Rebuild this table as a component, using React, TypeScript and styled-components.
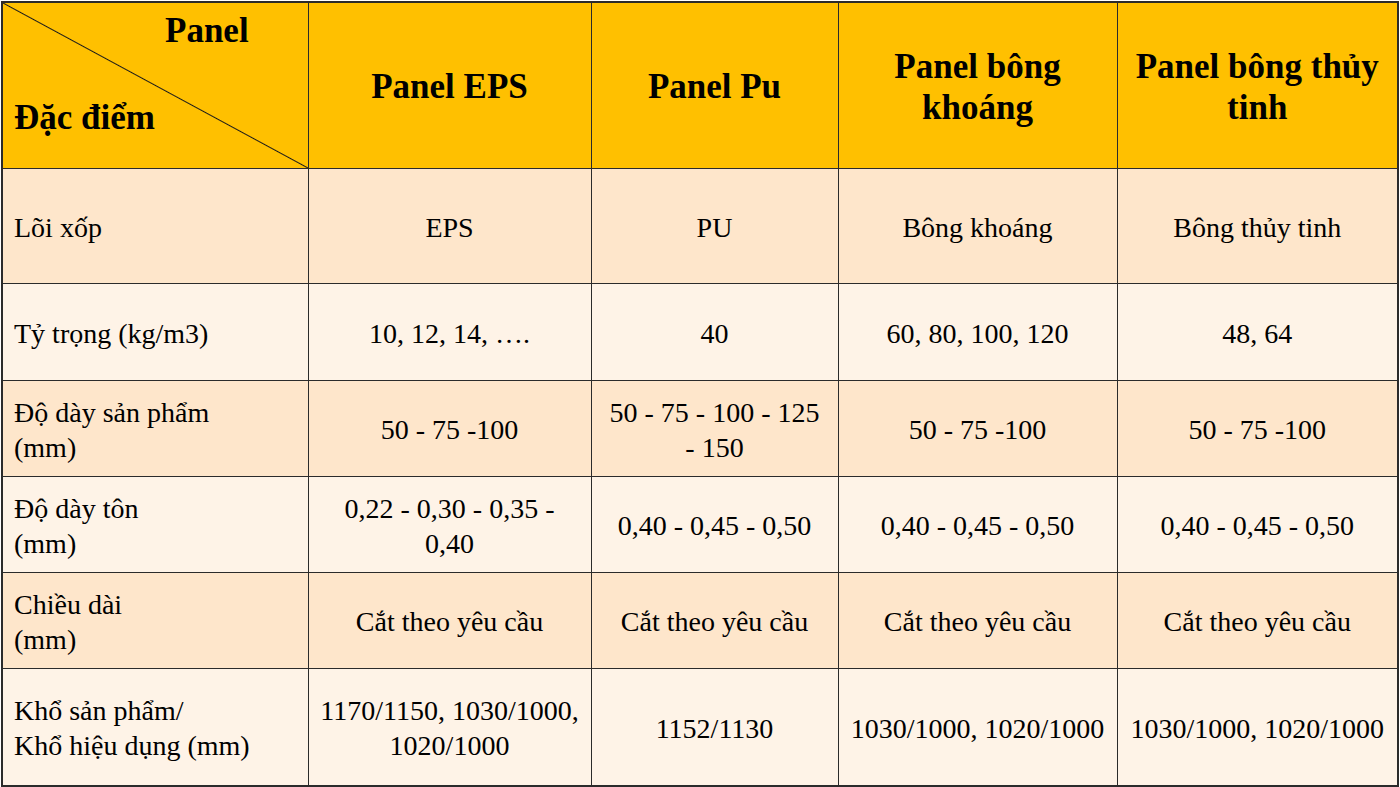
import styled, { createGlobalStyle } from 'styled-components'

const GlobalStyle = createGlobalStyle`
  html, body {
    margin: 0;
    padding: 0;
    background: #ffffff;
  }
  body {
    font-family: 'Liberation Serif', serif;
    color: #000;
  }
`

const Wrapper = styled.div`
  padding: 1px 0 0 1px;
`

const Table = styled.table`
  border-collapse: collapse;
  table-layout: fixed;
  width: 1396px;
  border: 2px solid #2b2b2b;
  font-family: 'Liberation Serif', serif;
  color: #000;
`

const HeadCell = styled.th`
  background: #ffc000;
  border: 1.5px solid #2b2b2b;
  font-family: 'Liberation Serif', serif;
  font-size: 35px;
  line-height: 41px;
  font-weight: 700;
  text-align: center;
  vertical-align: middle;
  padding: 3px 8px 0;
`

const CornerCell = styled(HeadCell)`
  padding: 0;
  background:
    linear-gradient(
      to top right,
      transparent calc(50% - 1px),
      #1a1a1a 50%,
      transparent calc(50% + 1px)
    ),
    #ffc000;
`

const CornerInner = styled.div`
  display: flex;
  flex-direction: column;
  justify-content: space-between;
  height: 164px;
  padding: 7px 10px 29px 11px;
  box-sizing: border-box;
  text-align: left;
`

const CornerTop = styled.span`
  padding-left: 151px;
`

const Row = styled.tr<{ $shade: boolean; $h: number }>`
  height: ${({ $h }) => $h}px;
  background: ${({ $shade }) => ($shade ? '#fee6cb' : '#fef3e7')};
`

const LabelCell = styled.td`
  border: 1.5px solid #2b2b2b;
  font-family: 'Liberation Serif', serif;
  font-size: 28px;
  line-height: 35px;
  padding: 3px 10px 0 11px;
  text-align: left;
  vertical-align: middle;
`

const ValueCell = styled(LabelCell)`
  text-align: center;
  padding: 3px 8px 0;
`

type Line = string[]

interface DataRow {
  label: Line
  values: Line[]
  height: number
}

const columns: { title: Line; width: number }[] = [
  { title: ['Panel EPS'], width: 283 },
  { title: ['Panel Pu'], width: 247 },
  { title: ['Panel bông', 'khoáng'], width: 279 },
  { title: ['Panel bông thủy', 'tinh'], width: 281 },
]

const rows: DataRow[] = [
  {
    label: ['Lõi xốp'],
    values: [['EPS'], ['PU'], ['Bông khoáng'], ['Bông thủy tinh']],
    height: 115,
  },
  {
    label: ['Tỷ trọng (kg/m3)'],
    values: [['10, 12, 14, ….'], ['40'], ['60, 80, 100, 120'], ['48, 64']],
    height: 97,
  },
  {
    label: ['Độ dày sản phẩm', '(mm)'],
    values: [
      ['50 - 75 -100'],
      ['50 - 75 - 100 - 125', '- 150'],
      ['50 - 75 -100'],
      ['50 - 75 -100'],
    ],
    height: 96,
  },
  {
    label: ['Độ dày tôn', '(mm)'],
    values: [
      ['0,22 - 0,30 - 0,35 -', '0,40'],
      ['0,40 - 0,45 - 0,50'],
      ['0,40 - 0,45 - 0,50'],
      ['0,40 - 0,45 - 0,50'],
    ],
    height: 96,
  },
  {
    label: ['Chiều dài', '(mm)'],
    values: [
      ['Cắt theo yêu cầu'],
      ['Cắt theo yêu cầu'],
      ['Cắt theo yêu cầu'],
      ['Cắt theo yêu cầu'],
    ],
    height: 96,
  },
  {
    label: ['Khổ sản phẩm/', 'Khổ hiệu dụng (mm)'],
    values: [
      ['1170/1150, 1030/1000,', '1020/1000'],
      ['1152/1130'],
      ['1030/1000, 1020/1000'],
      ['1030/1000, 1020/1000'],
    ],
    height: 118,
  },
]

const renderLines = (lines: Line) =>
  lines.map((line, i) => (
    <span key={i}>
      {i > 0 && <br />}
      {line}
    </span>
  ))

const App = () => {
  return (
    <Wrapper>
      <GlobalStyle />
      <Table>
        <colgroup>
          <col style={{ width: 306 }} />
          {columns.map((c) => (
            <col key={c.title.join(' ')} style={{ width: c.width }} />
          ))}
        </colgroup>
        <thead>
          <tr style={{ height: 166 }}>
            <CornerCell>
              <CornerInner>
                <CornerTop>Panel</CornerTop>
                <span>Đặc điểm</span>
              </CornerInner>
            </CornerCell>
            {columns.map((c) => (
              <HeadCell key={c.title.join(' ')}>{renderLines(c.title)}</HeadCell>
            ))}
          </tr>
        </thead>
        <tbody>
          {rows.map((row, r) => (
            <Row key={row.label.join(' ')} $shade={r % 2 === 0} $h={row.height}>
              <LabelCell>{renderLines(row.label)}</LabelCell>
              {row.values.map((v, i) => (
                <ValueCell key={i}>{renderLines(v)}</ValueCell>
              ))}
            </Row>
          ))}
        </tbody>
      </Table>
    </Wrapper>
  )
}

export default App
